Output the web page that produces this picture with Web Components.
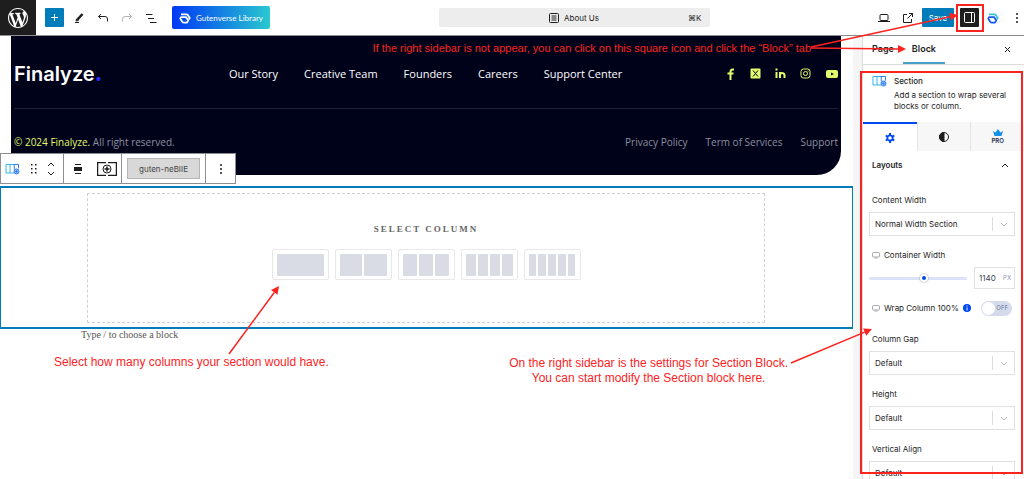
<!DOCTYPE html>
<html lang="en">
<head>
<meta charset="utf-8">
<title>About Us</title>
<style>
    body{
        margin: 0;
        background: #fff;
        color: #1e1e1e;
        font: 8px/12px Inter, "Liberation Sans", sans-serif;
    }
</style>
</head>
<body>
<editor-app>
    <editor-header slot="header"></editor-header>
    <site-footer slot="canvas"></site-footer>
    <block-toolbar slot="toolbar" name="guten-neBIIE"></block-toolbar>
    <section-block slot="canvas"></section-block>
    <block-sidebar slot="sidebar">
        <setting-select label="Content Width" value="Normal Width Section"></setting-select>
        <setting-range label="Container Width" value="1140" unit="PX"></setting-range>
        <setting-toggle label="Wrap Column 100%"></setting-toggle>
        <setting-select label="Column Gap" value="Default"></setting-select>
        <setting-select label="Height" value="Default"></setting-select>
        <setting-select label="Vertical Align" value="Default"></setting-select>
    </block-sidebar>
    <guide-notes slot="notes"></guide-notes>
</editor-app>

<script>
const reset = `
    *{
        box-sizing: border-box;
    }
    button, input, select{
        margin: 0;
        padding: 0;
        border: 0;
        background: none;
        color: inherit;
        font: inherit;
    }
    a{
        color: inherit;
        text-decoration: none;
    }
    svg{
        display: block;
        flex: none;
    }
`

const gutenLogo = (a, b) => `
<svg width="12" height="12" viewBox="0 0 24 24" fill="none" stroke-width="3.500" stroke-linejoin="round" aria-hidden="true">
    <path stroke="${a}" d="M4 4.500h11q2 0 3 2l3.500 5.500-2 3"/>
    <path stroke="${b}" d="M4.500 10H14l4.500 7-2.500 4H9q-1.500 0-2.500-1.500L2.500 13z"/>
</svg>`

const sectionIcon = `
<svg width="15" height="12" viewBox="0 0 30 24" fill="none" stroke="#2f7df0" stroke-width="2" aria-hidden="true">
    <path stroke="#35b5ea" d="M18 20H2V3h16M10 3v17"/>
    <path d="M17 3h10v8M18.500 3v10"/>
    <circle cx="23" cy="17" r="5" fill="#8fbdf8"/>
    <path d="M23 14v6M20 17h6" stroke-width="1.500"/>
</svg>`

const monitorIcon = `
<svg width="8" height="8" viewBox="0 0 16 16" fill="none" stroke="#8b8f98" stroke-width="1.500" aria-hidden="true">
    <rect x="1" y="3" width="14" height="9" rx="2"/><path d="M5 14h6"/>
</svg>`

class BaseElement extends HTMLElement{
    constructor(){
        super()
        this.attachShadow({mode:'open'})
    }
    connectedCallback(){
        this.render()
    }
    render(){
        this.shadowRoot.innerHTML = `
        <style>
            ${reset}
            ${this.styles()}
        </style>
        ${this.template()}
        `;
    }
}

class EditorApp extends BaseElement{
    styles(){
        return `
        :host{
            display: grid;
            position: relative;
            grid-template: auto 1fr / 1fr 171px;
            height: 100vh;
            overflow: hidden;
        }
        .header{
            grid-column: 1 / -1;
        }
        main{
            display: flex;
            flex-direction: column;
            gap: 11px;
            position: relative;
            min-height: 0;
        }
        .toolbar{
            position: absolute;
            top: 117px;
            left: 0;
            z-index: 1;
        }
        p{
            margin: -12px 81px 0;
            color: #555;
            font: 10px/14px "Liberation Serif", serif;
        }
        aside{
            min-height: 0;
            overflow: hidden;
            padding-left: 9px;
            background: #f5f5f5;
        }
        `
    }
    template(){
        return `
        <div class="header"><slot name="header"></slot></div>
        <main>
            <slot name="canvas"></slot>
            <p>Type / to choose a block</p>
            <div class="toolbar"><slot name="toolbar"></slot></div>
        </main>
        <aside><slot name="sidebar"></slot></aside>
        <slot name="notes"></slot>
        `
    }
}

class EditorHeader extends BaseElement{
    styles(){
        return `
        :host{
            display: block;
        }
        header{
            display: flex;
            justify-content: space-between;
            align-items: center;
            height: 36px;
            border-bottom: 1px solid #8d8d93;
        }
        .group{
            display: flex;
            align-items: center;
            gap: 12px;
        }
        button{
            display: flex;
            align-items: center;
            justify-content: center;
        }
        .wp{
            display: grid;
            place-items: center;
            width: 36px;
            height: 35px;
            margin-right: -3px;
            background: #1e1e1e;
        }
        .add{
            width: 19px;
            height: 19px;
            margin-right: -3px;
            border-radius: 1px;
            background: #007cba;
        }
        .library{
            gap: 5px;
            width: 98px;
            height: 23px;
            margin-left: 3px;
            border-radius: 2px;
            background: linear-gradient(90deg, #0038f5, #28c8d0);
            color: #fff;
            font-family: Lato, sans-serif;
            white-space: nowrap;
        }
        .document{
            display: grid;
            grid-template-columns: 1fr auto 1fr;
            align-items: center;
            width: 271px;
            height: 19px;
            padding: 0 8px;
            border-radius: 2px;
            background: #ededed;
        }
        .document .title{
            display: flex;
            align-items: center;
            gap: 5px;
            grid-column: 2;
        }
        .document kbd{
            justify-self: end;
            font: 8px/12px Inter, "DejaVu Sans", sans-serif;
        }
        .right{
            padding-right: 1px;
        }
        .save{
            width: 32px;
            height: 19px;
            margin-left: -4px;
            border-radius: 1px;
            background: #007cba;
            color: #fff;
        }
        .panel{
            width: 19px;
            height: 19px;
            margin: 0 -4px 0 -6px;
            border-radius: 1px;
            background: #1e1e1e;
        }
        `
    }
    template(){
        return `
        <header>
            <div class="group">
                <a class="wp" href="#" aria-label="View pages">
                    <svg width="20" height="20" viewBox="0 0 20 20" fill="#fff">
                        <path d="M20 10c0-5.510-4.490-10-10-10S0 4.490 0 10s4.490 10 10 10 10-4.490 10-10zM7.780 15.370L4.370 6.220c.55-.02 1.170-.08 1.170-.08.5-.06.44-1.130-.06-1.110 0 0-1.450.11-2.370.11-.18 0-.37 0-.58-.01C4.120 2.690 6.870 1.110 10 1.110c2.330 0 4.450.87 6.050 2.340-.68-.11-1.650.39-1.650 1.580 0 .74.45 1.360.9 2.100.35.61.55 1.360.55 2.460 0 1.490-1.400 5-1.400 5l-3.030-8.370c.54-.02.82-.17.82-.17.5-.05.44-1.250-.06-1.220 0 0-1.440.12-2.380.12-.87 0-2.330-.12-2.330-.12-.5-.03-.56 1.200-.06 1.220l.92.08 1.260 3.410zM17.410 10c.24-.64.74-1.870.43-4.250.7 1.290 1.050 2.710 1.050 4.250 0 3.290-1.730 6.240-4.400 7.780.97-2.590 1.940-5.200 2.920-7.780zM6.100 18.090C3.120 16.650 1.110 13.530 1.110 10c0-1.300.23-2.480.72-3.590C3.250 10.300 4.670 14.200 6.100 18.090zm4.030-6.630l2.580 6.980c-.86.29-1.760.45-2.710.45-.79 0-1.570-.11-2.290-.33.81-2.380 1.620-4.740 2.420-7.100z"/>
                    </svg>
                </a>
                <button class="add" aria-label="Add block">
                    <svg width="9" height="9" viewBox="0 0 9 9" stroke="#fff"><path d="M4.500 1v7M1 4.500h7"/></svg>
                </button>
                <button aria-label="Tools">
                    <svg width="12" height="12" viewBox="0 0 12 12" stroke="#1e1e1e" fill="none"><path d="M4.500 7.500 9.500 2" stroke-width="2.500"/><path d="M3 9l2.500-.5L3.500 7zM2 10.500h4"/></svg>
                </button>
                <button aria-label="Undo">
                    <svg width="12" height="12" viewBox="0 0 12 12" stroke="#1e1e1e" fill="none"><path d="M4 2 1.500 4.500 4 7M1.500 4.500H8q2.500 0 2.500 2.500v2.500"/></svg>
                </button>
                <button aria-label="Redo">
                    <svg width="12" height="12" viewBox="0 0 12 12" stroke="#b5b5b5" fill="none"><path d="M8 2l2.500 2.500L8 7M10.500 4.500H4Q1.500 4.500 1.500 7v2.500"/></svg>
                </button>
                <button aria-label="Document overview">
                    <svg width="12" height="12" viewBox="0 0 12 12" stroke="#1e1e1e"><path d="M1 2.500h6.500M3 6.500h6M5 10.500h6.500"/></svg>
                </button>
                <button class="library">${gutenLogo('#fff', '#fff')}Gutenverse Library</button>
            </div>
            <button class="document">
                <span class="title">
                    <svg width="10" height="10" viewBox="0 0 10 10" stroke="#1e1e1e" fill="none"><rect x=".5" y=".5" width="9" height="9" rx="1"/><path d="M2.500 3h5M2.500 5h5M2.500 7h5"/></svg>
                    About Us
                </span>
                <kbd>⌘K</kbd>
            </button>
            <div class="group right">
                <button aria-label="View">
                    <svg width="12" height="12" viewBox="0 0 12 12" stroke="#1e1e1e" fill="none"><rect x="2" y="2.500" width="8" height="6" rx="1"/><path d="M0 9.500h12"/></svg>
                </button>
                <button aria-label="View page">
                    <svg width="12" height="12" viewBox="0 0 12 12" stroke="#1e1e1e" fill="none"><path d="M5 2.500H1.500v8h8V7M7 1.500h3.500V5M10.500 1.500l-5 5"/></svg>
                </button>
                <button class="save">Save</button>
                <button class="panel" aria-label="Settings" aria-pressed="true">
                    <svg width="11" height="11" viewBox="0 0 11 11" stroke="#fff" fill="none"><rect x=".5" y=".5" width="10" height="10" rx="1"/><path d="M7.500 1v9"/></svg>
                </button>
                <button aria-label="Gutenverse">${gutenLogo('#35c3e0', '#1358f0')}</button>
                <button aria-label="Options">
                    <svg width="12" height="12" viewBox="0 0 12 12" fill="#1e1e1e"><circle cx="6" cy="2" r="1"/><circle cx="6" cy="6" r="1"/><circle cx="6" cy="10" r="1"/></svg>
                </button>
            </div>
        </header>
        `
    }
}

class SiteFooter extends BaseElement{
    styles(){
        return `
        :host{
            display: block;
            margin: 0 12px 0 11px;
            padding: 0 3px;
            border-radius: 0 0 24px 0;
            background: #00021a;
            color: #fff;
            font: 11px/16px "Open Sans", "Noto Sans", sans-serif;
        }
        .row{
            display: flex;
            align-items: center;
            justify-content: space-between;
        }
        .top{
            height: 73px;
            padding-top: 3px;
            border-bottom: 1px solid #1e2036;
        }
        .top nav{
            margin-left: 24px;
            font-weight: 500;
        }
        .bottom{
            height: 66px;
            color: #8e909e;
            font-size: 10px;
        }
        .logo{
            font: 600 20px/24px Inter, sans-serif;
        }
        .logo span{
            color: #2a2aff;
            font-weight: 900;
        }
        nav, .social{
            display: flex;
            align-items: center;
            gap: 26px;
        }
        .social{
            gap: 14px;
            color: #e4fb6b;
        }
        .legal{
            gap: 18px;
        }
        .copy b{
            color: #e4fb6b;
            font-weight: 500;
        }
        `
    }
    template(){
        return `
        <div class="row top">
            <a class="logo" href="#">Finalyze<span>.</span></a>
            <nav>
                <a href="#">Our Story</a>
                <a href="#">Creative Team</a>
                <a href="#">Founders</a>
                <a href="#">Careers</a>
                <a href="#">Support Center</a>
            </nav>
            <div class="social">
                <a href="#" aria-label="Facebook"><svg width="11" height="12" viewBox="0 0 11 12" fill="none" stroke="currentColor" stroke-width="2"><path d="M9 1.500H7.500Q5.500 1.500 5.500 4v8M2.500 5.500h6"/></svg></a>
                <a href="#" aria-label="X"><svg width="11" height="11" viewBox="0 0 11 11"><rect x=".5" y=".5" width="10" height="10" rx="1" fill="currentColor"/><path d="M3 2.500 8 8.500M8 2.500l-5 6" stroke="#00021a"/></svg></a>
                <a href="#" aria-label="LinkedIn"><svg width="11" height="11" viewBox="0 0 11 11" fill="none" stroke="currentColor" stroke-width="2"><path d="M1.500 4v6M5 10V4M5 7q0-2 2-2t2.500 2v3"/><path d="M.5 1.500h2"/></svg></a>
                <a href="#" aria-label="Instagram"><svg width="11" height="11" viewBox="0 0 11 11" fill="none" stroke="currentColor"><rect x="1" y="1" width="9" height="9" rx="2.500"/><circle cx="5.500" cy="5.500" r="2"/><path d="M8 2.500v1"/></svg></a>
                <a href="#" aria-label="YouTube"><svg width="13" height="10" viewBox="0 0 13 10"><rect x="1" y="1" width="12" height="8" rx="2" fill="currentColor"/><path d="M6 3.500v3L9 5z" fill="#00021a"/></svg></a>
            </div>
        </div>
        <div class="row bottom">
            <div class="copy"><b>© 2024 Finalyze.</b> All right reserved.</div>
            <nav class="legal">
                <a href="#">Privacy Policy</a>
                <a href="#">Term of Services</a>
                <a href="#">Support</a>
            </nav>
        </div>
        `
    }
}

class BlockToolbar extends BaseElement{
    styles(){
        return `
        :host{
            display: flex;
            height: 29px;
            border: 1px solid #8d8d93;
            background: #fff;
        }
        .group{
            display: flex;
            align-items: center;
            justify-content: space-between;
            border-right: 1px solid #8d8d93;
        }
        .group:last-child{
            border: 0;
        }
        .move{
            width: 63px;
            padding: 0 8px 0 4px;
        }
        .align{
            width: 58px;
            padding: 0 4px 0 8px;
        }
        .name{
            padding: 0 5px;
        }
        .name button{
            width: 73px;
            height: 21px;
            border: 1px solid #b5b5b5;
            background: #d8d8d8;
            color: #444;
        }
        .more{
            justify-content: center;
            width: 29px;
        }
        `
    }
    template(){
        return `
        <div class="group move">
            <button aria-label="Section">${sectionIcon}</button>
            <button aria-label="Drag"><svg width="6" height="10" viewBox="0 0 6 10" fill="#1e1e1e"><path d="M0 0h1.500v1.500H0zM4 0h1.500v1.500H4zM0 4h1.500v1.500H0zM4 4h1.500v1.500H4zM0 8h1.500v1.500H0zM4 8h1.500v1.500H4z"/></svg></button>
            <button aria-label="Move up or down"><svg width="8" height="14" viewBox="0 0 8 14" fill="none" stroke="#1e1e1e"><path d="M1 4l3-3 3 3M1 10l3 3 3-3"/></svg></button>
        </div>
        <div class="group align">
            <button aria-label="Align"><svg width="12" height="10" viewBox="0 0 12 10" fill="#1e1e1e"><path d="M3 0h6v1H3zM2 3h8v4H2zM3 9h6v1H3z"/></svg></button>
            <button aria-label="Add column"><svg width="20" height="14" viewBox="0 0 20 14" fill="none" stroke="#1e1e1e"><path d="M9 .5H.5v13H9M11 .5h8.500v13H11" stroke-width="1.500"/><circle cx="10" cy="7" r="4"/><path d="M10 4.500v5M7.500 7h5" stroke-width="1.500"/></svg></button>
        </div>
        <div class="group name"><button>${this.getAttribute('name')}</button></div>
        <div class="group more">
            <button aria-label="Options"><svg width="4" height="10" viewBox="0 0 4 10" fill="#1e1e1e"><circle cx="2" cy="1" r="1"/><circle cx="2" cy="5" r="1"/><circle cx="2" cy="9" r="1"/></svg></button>
        </div>
        `
    }
}

class SectionBlock extends BaseElement{
    styles(){
        return `
        :host{
            display: block;
            padding: 5px 87px 4px 86px;
            border: 2px solid #007cba;
            border-width: 2px 1px;
        }
        .inner{
            display: flex;
            flex-direction: column;
            align-items: center;
            gap: 13px;
            height: 130px;
            padding-top: 28px;
            border: 1px dashed #d0d0d0;
        }
        h2{
            margin: 0;
            color: #666;
            font: 700 9px/14px "Liberation Serif", serif;
            letter-spacing: 2px;
            text-transform: uppercase;
        }
        .choices{
            display: flex;
            gap: 6px;
        }
        button{
            display: flex;
            gap: 2px;
            width: 57px;
            height: 31px;
            padding: 4px;
            border: 1px solid #e8e8ea;
            border-radius: 2px;
        }
        button i{
            flex: 1;
            height: 22px;
            border-radius: 1px;
            background: #d9dce5;
        }
        `
    }
    template(){
        const choices = [1, 2, 3, 4, 5].map(n =>
            `<button aria-label="${n} columns">${'<i></i>'.repeat(n)}</button>`
        ).join('')
        return `
        <div class="inner">
            <h2>Select Column</h2>
            <div class="choices">${choices}</div>
        </div>
        `
    }
}

class BlockSidebar extends BaseElement{
    styles(){
        return `
        :host{
            display: block;
            height: 100%;
            border-left: 1px solid #ddd;
            background: #fff;
        }
        .tabs{
            display: flex;
            height: 29px;
            border-bottom: 1px solid #ddd;
            font-size: 9px;
            font-weight: 600;
        }
        .tabs button{
            padding: 0 9px;
            border-bottom: 2px solid transparent;
        }
        .tabs .active{
            border-color: #4a9fc9;
        }
        .tabs .close{
            margin-left: auto;
            padding: 0 13px;
        }
        .card{
            display: grid;
            grid-template-columns: 15px 1fr;
            align-content: start;
            gap: 3px 7px;
            height: 57px;
            padding: 10px 9px 0;
        }
        .card h2{
            margin: 0;
            font-size: 8px;
            line-height: 12px;
            font-weight: 500;
        }
        .card p{
            grid-column: 2;
            margin: 0;
            line-height: 11px;
            white-space: nowrap;
        }
        .modes{
            display: grid;
            grid-template-columns: repeat(3, 1fr);
            height: 29px;
        }
        .modes button{
            display: flex;
            flex-direction: column;
            align-items: center;
            justify-content: center;
            border-left: 1px solid #e4e4e4;
            background: #f7f7f8;
            color: #1c2b45;
            font-size: 6px;
            line-height: 8px;
            font-weight: 600;
        }
        .modes .active{
            border-top: 2px solid #0048f0;
            border-left: 0;
            background: #fff;
        }
        .panel{
            display: flex;
            align-items: center;
            justify-content: space-between;
            width: 100%;
            height: 28px;
            padding: 0 15px 0 9px;
            font-weight: 600;
        }
        .body{
            display: flex;
            flex-direction: column;
            gap: 13px;
            padding: 15px 9px 0 6px;
        }
        `
    }
    template(){
        return `
        <div class="tabs">
            <button>Page</button>
            <button class="active">Block</button>
            <button class="close" aria-label="Close settings"><svg width="7" height="7" viewBox="0 0 7 7" stroke="#1e1e1e"><path d="M1 1l5 5M6 1 1 6"/></svg></button>
        </div>
        <div class="card">
            ${sectionIcon}
            <h2>Section</h2>
            <p>Add a section to wrap several<br>blocks or column.</p>
        </div>
        <div class="modes">
            <button class="active" aria-label="Settings"><svg width="10" height="10" viewBox="0 0 10 10" fill="none" stroke="#0048f0"><circle cx="5" cy="5" r="2.700" stroke-width="1.800"/><path d="M5 0v2M5 8v2M.7 2.500l1.700 1M7.600 6.500l1.700 1M.7 7.500l1.700-1M7.600 3.500l1.700-1" stroke-width="2"/></svg></button>
            <button aria-label="Style"><svg width="10" height="10" viewBox="0 0 10 10" fill="none" stroke="#1e1e1e"><circle cx="5" cy="5" r="4.500"/><path d="M5 .5a4.500 4.500 0 0 0 0 9z" fill="#1e1e1e"/></svg></button>
            <button><svg width="10" height="8" viewBox="0 0 10 8" fill="#1590e8"><path d="M0 2l2.500 1.500L5 0l2.500 3.500L10 2 8.500 7h-7z"/></svg>PRO</button>
        </div>
        <button class="panel" aria-expanded="true">Layouts<svg width="8" height="5" viewBox="0 0 8 5" fill="none" stroke="#1e1e1e"><path d="M1 4l3-3 3 3"/></svg></button>
        <div class="body"><slot></slot></div>
        `
    }
}

class SettingSelect extends BaseElement{
    styles(){
        return `
        :host{
            display: block;
        }
        label{
            display: block;
            height: 18px;
            padding-left: 3px;
        }
        .box{
            display: grid;
            grid-template-columns: 1fr 22px;
            align-items: center;
            height: 24px;
            border: 1px solid #e0e0e0;
        }
        select{
            grid-area: 1 / 1 / 2 / 3;
            width: 100%;
            height: 100%;
            padding-left: 5px;
            appearance: none;
        }
        .arrow{
            grid-area: 1 / 2;
            display: grid;
            place-items: center;
            height: 14px;
            border-left: 1px solid #ddd;
            pointer-events: none;
        }
        `
    }
    template(){
        return `
        <label for="field">${this.getAttribute('label')}</label>
        <div class="box">
            <select id="field"><option>${this.getAttribute('value')}</option></select>
            <span class="arrow"><svg width="8" height="5" viewBox="0 0 8 5" fill="none" stroke="#b5b5b5"><path d="M1 1l3 3 3-3"/></svg></span>
        </div>
        `
    }
}

class SettingRange extends BaseElement{
    styles(){
        return `
        :host{
            display: block;
        }
        label{
            display: flex;
            align-items: center;
            gap: 4px;
            padding-left: 3px;
        }
        .row{
            display: flex;
            align-items: center;
            gap: 7px;
            margin-top: 6px;
        }
        input[type=range]{
            flex: 1;
            min-width: 0;
            height: 10px;
            appearance: none;
        }
        input[type=range]::-webkit-slider-runnable-track{
            height: 3px;
            border-radius: 2px;
            background: #dbe3f8;
        }
        input[type=range]::-webkit-slider-thumb{
            appearance: none;
            width: 8px;
            height: 8px;
            margin-top: -3px;
            border: 2px solid #fff;
            border-radius: 50%;
            background: #0048f0;
            box-shadow: 0 0 2px #888;
        }
        .value{
            display: flex;
            align-items: center;
            width: 41px;
            height: 22px;
            padding: 0 3px 0 4px;
            border: 1px solid #e0e0e0;
            color: #3b4252;
        }
        .value input{
            flex: 1;
            min-width: 0;
        }
        .value span{
            color: #8b93a8;
            font-size: 6px;
        }
        `
    }
    template(){
        const value = this.getAttribute('value')
        const label = this.getAttribute('label')
        return `
        <label for="range">${monitorIcon}${label}</label>
        <div class="row">
            <input id="range" type="range" min="0" max="2000" value="${value}">
            <div class="value"><input type="text" aria-label="${label} value" value="${value}"><span>${this.getAttribute('unit')}</span></div>
        </div>
        `
    }
}

class SettingToggle extends BaseElement{
    styles(){
        return `
        :host{
            display: flex;
            align-items: center;
            gap: 4px;
            height: 12px;
            margin-bottom: 6px;
            padding: 0 3px;
        }
        label{
            display: flex;
            align-items: center;
            gap: 4px;
            white-space: nowrap;
        }
        .switch{
            display: grid;
            flex: none;
            align-items: center;
            width: 31px;
            height: 15px;
            margin-left: auto;
        }
        .switch > *{
            grid-area: 1 / 1;
        }
        input{
            display: flex;
            align-items: center;
            width: 100%;
            height: 100%;
            padding: 1px;
            appearance: none;
            border-radius: 8px;
            background: #d5daec;
        }
        input::before{
            content: "";
            width: 13px;
            height: 13px;
            border-radius: 50%;
            background: #fff;
        }
        .switch span{
            justify-self: end;
            padding-right: 4px;
            color: #6f7a99;
            font-size: 6px;
            pointer-events: none;
        }
        `
    }
    template(){
        return `
        <label for="toggle">${monitorIcon}${this.getAttribute('label')}</label>
        <svg width="8" height="8" viewBox="0 0 8 8"><circle cx="4" cy="4" r="4" fill="#0048f0"/><path d="M4 1.500v1M4 3.500v3" stroke="#fff"/></svg>
        <div class="switch"><input id="toggle" type="checkbox"><span>OFF</span></div>
        `
    }
}

// red callouts drawn over the editor, the ones about the sidebar stick to the right edge
class GuideNotes extends BaseElement{
    styles(){
        return `
        :host{
            position: absolute;
            inset: 0;
            z-index: 2;
            overflow: hidden;
            pointer-events: none;
            color: #fb231f;
            font: 12px/15px "Liberation Sans", Arial, sans-serif;
        }
        svg, p{
            position: absolute;
            margin: 0;
            white-space: nowrap;
        }
        svg{
            top: 0;
        }
        .start{
            left: 0;
        }
        .end{
            right: 0;
        }
        .open{
            top: 41px;
            right: 213px;
            font-size: 11px;
            line-height: 14px;
        }
        .columns{
            top: 355px;
            left: 54px;
        }
        .settings{
            top: 356px;
            right: 236px;
            text-align: center;
        }
        `
    }
    arrow(x1, y1, x2, y2){
        const a = Math.atan2(y2 - y1, x2 - x1)
        const size = 8
        const bx = x2 - size * Math.cos(a)
        const by = y2 - size * Math.sin(a)
        const dx = 4 * Math.sin(a)
        const dy = 4 * Math.cos(a)
        return `
        <path d="M${x1} ${y1}L${bx} ${by}" stroke="#fb231f" stroke-width="1.500"/>
        <path d="M${x2} ${y2}L${bx - dx} ${by + dy}L${bx + dx} ${by - dy}z" fill="#fb231f"/>
        `
    }
    template(){
        return `
        <svg class="start" width="400" height="479" viewBox="0 0 400 479" fill="none">
            ${this.arrow(229, 354, 279, 286)}
        </svg>
        <svg class="end" width="240" height="479" viewBox="784 0 240 479" fill="none">
            ${this.arrow(811, 47, 958, 15)}
            ${this.arrow(811, 48, 906, 49)}
            ${this.arrow(791, 363, 872, 329)}
            <rect x="957" y="5" width="26" height="26" stroke="#fb231f" stroke-width="2"/>
            <rect x="861" y="72" width="161" height="401" stroke="#fb231f" stroke-width="2"/>
        </svg>
        <p class="open">If the right sidebar is not appear, you can click on this square icon and click the “Block” tab</p>
        <p class="columns">Select how many columns your section would have.</p>
        <p class="settings">On the right sidebar is the settings for Section Block.<br>You can start modify the Section block here.</p>
        `
    }
}

window.customElements.define('editor-app',EditorApp)
window.customElements.define('editor-header',EditorHeader)
window.customElements.define('site-footer',SiteFooter)
window.customElements.define('block-toolbar',BlockToolbar)
window.customElements.define('section-block',SectionBlock)
window.customElements.define('block-sidebar',BlockSidebar)
window.customElements.define('setting-select',SettingSelect)
window.customElements.define('setting-range',SettingRange)
window.customElements.define('setting-toggle',SettingToggle)
window.customElements.define('guide-notes',GuideNotes)
</script>
</body>
</html>
